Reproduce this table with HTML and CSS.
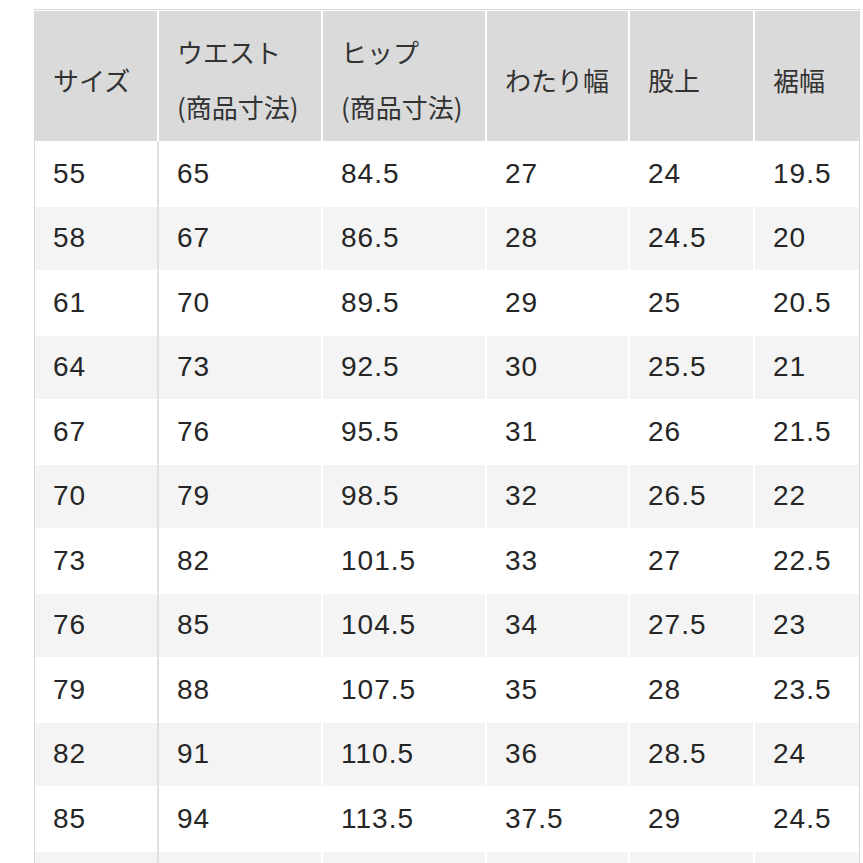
FILE: index.html
```html
<!DOCTYPE html>
<html lang="ja">
<head>
<meta charset="utf-8">
<title>サイズ表</title>
<link rel="stylesheet" href="styles.css">
</head>
<body>
<div class="wrap">
<table class="size-table">
<colgroup>
<col class="w1"><col class="w2"><col class="w3"><col class="w4"><col class="w5"><col class="w6">
</colgroup>
<thead>
<tr>
<th>サイズ</th>
<th>ウエスト<br>(商品寸法)</th>
<th>ヒップ<br>(商品寸法)</th>
<th>わたり幅</th>
<th>股上</th>
<th>裾幅</th>
</tr>
</thead>
<tbody>
<tr><td>55</td><td>65</td><td>84.5</td><td>27</td><td>24</td><td>19.5</td></tr>
<tr><td>58</td><td>67</td><td>86.5</td><td>28</td><td>24.5</td><td>20</td></tr>
<tr><td>61</td><td>70</td><td>89.5</td><td>29</td><td>25</td><td>20.5</td></tr>
<tr><td>64</td><td>73</td><td>92.5</td><td>30</td><td>25.5</td><td>21</td></tr>
<tr><td>67</td><td>76</td><td>95.5</td><td>31</td><td>26</td><td>21.5</td></tr>
<tr><td>70</td><td>79</td><td>98.5</td><td>32</td><td>26.5</td><td>22</td></tr>
<tr><td>73</td><td>82</td><td>101.5</td><td>33</td><td>27</td><td>22.5</td></tr>
<tr><td>76</td><td>85</td><td>104.5</td><td>34</td><td>27.5</td><td>23</td></tr>
<tr><td>79</td><td>88</td><td>107.5</td><td>35</td><td>28</td><td>23.5</td></tr>
<tr><td>82</td><td>91</td><td>110.5</td><td>36</td><td>28.5</td><td>24</td></tr>
<tr><td>85</td><td>94</td><td>113.5</td><td>37.5</td><td>29</td><td>24.5</td></tr>
<tr><td></td><td></td><td></td><td></td><td></td><td></td></tr>
</tbody>
</table>
</div>
</body>
</html>
```
FILE: styles.css
```css
html, body {
  margin: 0;
  padding: 0;
  background: #fff;
  overflow: hidden;
}

.wrap {
  margin: 9px 0 0 34px;
  width: 824px;
  border: 1px solid #d9d9d9;
  border-bottom: none;
}

.size-table {
  border-collapse: separate;
  border-spacing: 0;
  table-layout: fixed;
  width: 824px;
  color: #262626;
}

.w1 { width: 124px; }
.w2 { width: 164px; }
.w3 { width: 164px; }
.w4 { width: 143px; }
.w5 { width: 125px; }
.w6 { width: 104px; }

.size-table th,
.size-table td {
  text-align: left;
  padding: 0 0 0 18px;
  border-right: 2px solid #fff;
  white-space: nowrap;
}

.size-table th:last-child,
.size-table td:last-child {
  border-right: none;
}

.size-table th {
  background: #dadada;
  font-family: "Noto Sans CJK JP", "Noto Sans", sans-serif;
  font-weight: 400;
  font-size: 26px;
  line-height: 55px;
  height: 124px;
  padding-top: 6px;
  vertical-align: middle;
  border-top: 1px solid #fff;
  color: #333;
}

.size-table td {
  font-family: "Liberation Sans", Arial, sans-serif;
  font-size: 28px;
  letter-spacing: 1px;
  height: 64.5px;
  box-sizing: border-box;
  vertical-align: middle;
  background: #fff;
  border-top: 1px solid #fff;
}

.size-table td:first-child {
  border-right-color: #e0e0e0;
}

.size-table tbody tr:nth-child(even) td {
  background: #f4f4f4;
}
```
